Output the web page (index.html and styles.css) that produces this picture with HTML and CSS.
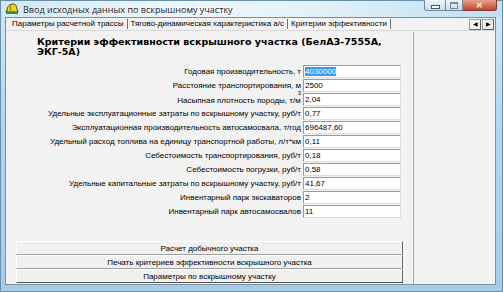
FILE: index.html
```html
<!DOCTYPE html>
<html lang="ru">
<head>
    <meta charset="UTF-8">
    <title>Ввод исходных данных по вскрышному участку</title>
    <link rel="stylesheet" href="styles.css">
</head>
<body>
    <div class="window">
        <div class="titlebar">
            <svg class="app-icon" width="14" height="12" viewBox="0 0 14 12">
                <path d="M2 8 C2 3 5 1 8 1 C11 1 12 4 12 7 L13 8 L13 9 L1 9 L1 8 Z" fill="#f2d21a" stroke="#5a4a00" stroke-width="1"/>
                <path d="M5 2 L6 8" stroke="#8a7400" stroke-width="1"/>
                <path d="M1 10 L13 10" stroke="#3d8a2a" stroke-width="2"/>
            </svg>
            <span class="title">Ввод исходных данных по вскрышному участку</span>
            <div class="caption-buttons">
                <div class="cap-btn cap-min"><span class="min-bar"></span></div>
                <div class="cap-btn cap-max"><span class="max-box"></span></div>
                <div class="cap-btn cap-close">✕</div>
            </div>
        </div>
        <div class="client">
            <div class="tabs">
                <div class="tab">Параметры расчетной трассы</div>
                <div class="tab">Тягово-динамическая характеристика а/с</div>
                <div class="tab active">Критерии эффективности</div>
                <div class="tab-scroll">
                    <span class="arrow">&#9664;</span>
                    <span class="arrow">&#9654;</span>
                </div>
            </div>
            <div class="page">
                <div class="form">
                    <h1>Критерии эффективности вскрышного участка (БелАЗ-7555А, ЭКГ-5А)</h1>
                    <div class="fields">
                        <label>Годовая производительность, т</label>
                        <div class="input"><span class="selected">4030000</span></div>
                        <label>Расстояние транспортирования, м</label>
                        <div class="input">2500</div>
                        <label>Насыпная плотность породы, т/м<sup class="cube">3</sup></label>
                        <div class="input">2,04</div>
                        <label>Удельные эксплуатационные затраты по вскрышному участку, руб/т</label>
                        <div class="input">0,77</div>
                        <label>Эксплуатационная производительность автосамосвала, т/год</label>
                        <div class="input">696487,60</div>
                        <label>Удельный расход топлива на единицу транспортной работы, л/т*км</label>
                        <div class="input">0,11</div>
                        <label>Себестоимость транспортирования, руб/т</label>
                        <div class="input">0,18</div>
                        <label>Себестоимость погрузки, руб/т</label>
                        <div class="input">0,58</div>
                        <label>Удельные капитальные затраты по вскрышному участку, руб/т</label>
                        <div class="input">41,67</div>
                        <label>Инвентарный парк экскаваторов</label>
                        <div class="input">2</div>
                        <label>Инвентарный парк автосамосвалов</label>
                        <div class="input">11</div>
                    </div>
                    <div class="actions">
                        <button>Расчет добычного участка</button>
                        <button>Печать критериев эффективности вскрышного участка</button>
                        <button>Параметры по вскрышному участку</button>
                    </div>
                </div>
                <div class="side"></div>
            </div>
        </div>
    </div>
</body>
</html>
```

FILE: styles.css
```css
body {
    margin: 0;
    background: #ffffff;
    font-family: "Liberation Sans", Arial, sans-serif;
}
.window {
    width: 503px;
    height: 292px;
    display: flex;
    flex-direction: column;
    background: linear-gradient(to bottom, #d4eaf6 0%, #b4d6ee 40%, #a6cde8 100%);
    box-sizing: border-box;
    border: 1px solid #6a8fa8;
}
.titlebar {
    height: 16px;
    display: flex;
    align-items: center;
    position: relative;
    background: linear-gradient(to right, #d0e8f6 0%, #eef7fc 35%, #e4f2fa 60%, #c0dff1 100%);
}
.app-icon {
    margin-left: 4px;
    margin-right: 4px;
}
.title {
    font-family: "Open Sans", "Noto Sans", sans-serif;
    font-size: 9px;
    color: #1a1a1a;
    text-shadow: 0 0 3px #ffffff;
}
.caption-buttons {
    position: absolute;
    top: -1px;
    right: 5px;
    display: flex;
}
.cap-btn {
    height: 11px;
    box-sizing: border-box;
    border: 1px solid #6e8aa3;
    border-top: none;
    display: flex;
    align-items: center;
    justify-content: center;
    background: linear-gradient(to bottom, #eef5fa, #c9dcea);
}
.cap-min {
    width: 22px;
    border-radius: 0 0 0 3px;
}
.cap-max {
    width: 17px;
    border-left: none;
}
.cap-close {
    width: 34px;
    border-left: none;
    border-color: #7a3a2e;
    border-radius: 0 0 3px 0;
    background: linear-gradient(to bottom, #e8a08e, #c8442c);
    color: #ffffff;
    font-size: 8px;
    font-weight: bold;
}
.min-bar {
    width: 7px;
    height: 2px;
    margin-top: 3px;
    border: 1px solid #555;
    background: #fff;
}
.max-box {
    width: 6px;
    height: 4px;
    border: 1px solid #7a8a98;
    border-top-width: 2px;
}
.client {
    flex: 1;
    margin: 0 6px 6px 4px;
    background: #f2f2f2;
    border: 1px solid #7d8d99;
    display: flex;
    flex-direction: column;
    font-size: 8px;
    color: #000;
}
.tabs {
    height: 12px;
    display: flex;
    align-items: center;
    padding-left: 5px;
    border-bottom: 1px solid #d8d8d8;
}
.tab {
    padding: 0 3px 0 1px;
    border-right: 1px solid #707070;
    line-height: 10px;
    white-space: nowrap;
}
.tab + .tab {
    padding-left: 3px;
}
.tab.active {
    background: #f8f8f8;
}
.tab-scroll {
    margin-left: auto;
    margin-right: 1px;
    display: flex;
    gap: 1px;
}
.arrow {
    width: 10px;
    height: 9px;
    font-size: 6px;
    line-height: 9px;
    text-align: center;
    background: #f0f0f0;
    border: 1px solid #a0a0a0;
    border-right-color: #606060;
    border-bottom-color: #606060;
}
.page {
    flex: 1;
    display: flex;
}
.form {
    width: 407px;
    border-right: 1px solid #a8a8a8;
    margin-top: 1px;
}
.side {
    flex: 1;
}
h1 {
    margin: 5px 0 0 31px;
    font-family: "DejaVu Sans", Verdana, sans-serif;
    font-size: 9.5px;
    line-height: 10px;
    font-weight: bold;
    width: 362px;
}
.fields {
    margin-top: 7px;
    display: grid;
    grid-template-columns: 295px 98px;
    column-gap: 2px;
    grid-auto-rows: 14px;
    align-items: center;
}
.fields label {
    text-align: right;
    white-space: nowrap;
}
.cube {
    font-size: 6px;
    vertical-align: 8px;
    line-height: 0;
    margin-left: -3px;
}
.input {
    height: 13px;
    box-sizing: border-box;
    background: #ffffff;
    border: 1px solid #9a9a9a;
    border-right-color: #dcdcdc;
    border-bottom-color: #dcdcdc;
    padding-left: 1px;
    line-height: 11px;
}
.selected {
    background: #3399ff;
    color: #ffffff;
}
.actions {
    margin: 23px 0 0 10px;
    width: 387px;
    display: flex;
    flex-direction: column;
}
.actions button {
    height: 14px;
    padding: 0;
    font-family: "Liberation Sans", Arial, sans-serif;
    font-size: 8px;
    background: #f0f0f0;
    border: 1px solid #a0a0a0;
    border-top-color: #ffffff;
    border-left-color: #ffffff;
    border-right-color: #6a6a6a;
    border-bottom-color: #a0a0a0;
}
.actions button:last-child {
    border-bottom-color: #505050;
}
```
